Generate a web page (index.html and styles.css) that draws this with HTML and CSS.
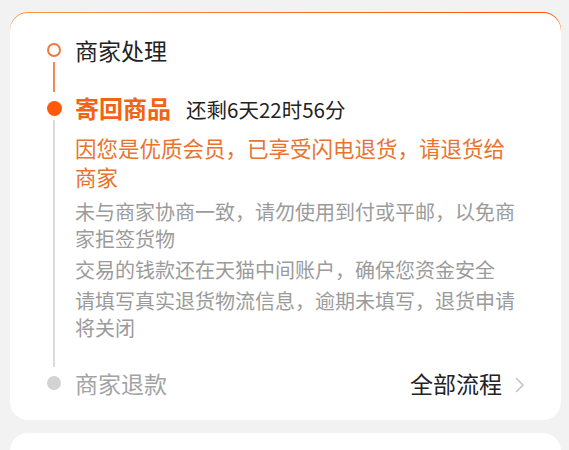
FILE: index.html
```html
<!DOCTYPE html>
<html lang="zh-CN">
<head>
<meta charset="utf-8">
<title>退货进度</title>
<link rel="stylesheet" href="styles.css">
</head>
<body>
<div class="page">
  <section class="panel">
    <div class="card">
      <div class="step step-done">
        <div class="rail">
          <span class="dot dot-ring"></span>
          <span class="line line-orange"></span>
        </div>
        <div class="body">
          <div class="title">商家处理</div>
        </div>
      </div>

      <div class="step step-current">
        <div class="rail">
          <span class="dot dot-fill"></span>
          <span class="line line-gray"></span>
        </div>
        <div class="body">
          <div class="title title-current">寄回商品<span class="countdown">还剩6天22时56分</span></div>
          <p class="desc desc-orange">因您是优质会员，已享受闪电退货，请退货给商家</p>
          <p class="desc desc-gray first">未与商家协商一致，请勿使用到付或平邮，以免商家拒签货物</p>
          <p class="desc desc-gray">交易的钱款还在天猫中间账户，确保您资金安全</p>
          <p class="desc desc-gray">请填写真实退货物流信息，逾期未填写，退货申请将关闭</p>
        </div>
      </div>

      <div class="step step-todo">
        <div class="rail">
          <span class="dot dot-gray"></span>
        </div>
        <div class="body body-row">
          <div class="title title-todo">商家退款</div>
          <a class="more">全部流程<svg class="chev" width="10" height="16" viewBox="0 0 10 16"><path d="M1.5 1.5 L8 8 L1.5 14.5" fill="none" stroke="#c4c4c4" stroke-width="1.6" stroke-linecap="round" stroke-linejoin="round"/></svg></a>
        </div>
      </div>
    </div>
  </section>
  <section class="card next-card"></section>
</div>
</body>
</html>
```

FILE: styles.css
```css
* { box-sizing: border-box; }
html, body { margin: 0; padding: 0; }
body {
  background: #f2f2f2;
  font-family: "Noto Sans CJK SC", "Noto Sans", "Liberation Sans", sans-serif;
  color: #222;
}
.page {
  padding: 12px 8px 0 10px;
}
.panel {
  background: linear-gradient(to right, #f39a50, #fb6a1e 60%, #ff5500) no-repeat top left / 100% 30px;
  border-radius: 18px;
}
.card {
  background: #fff;
  border-radius: 18px;
}
.panel > .card {
  padding: 21px 36px 21px 37px;
  position: relative;
  top: 1px;
}
.step {
  display: grid;
  grid-template-columns: 14px 1fr;
  column-gap: 14px;
}
.step-done, .step-current { padding-bottom: 26px; }
.rail {
  display: flex;
  flex-direction: column;
  align-items: center;
}
.step-done .rail, .step-current .rail { margin-bottom: -26px; }
.dot {
  width: 14px;
  height: 14px;
  border-radius: 50%;
  margin-top: 9px;
  flex: none;
}
.dot-ring { border: 2px solid #ef7a3a; }
.dot-fill { background: #ff5a0a; width: 15px; height: 15px; }
.dot-gray { background: #d3d3d3; }
.line {
  flex: 1;
  width: 1.5px;
  margin-top: 5px;
}
.line-orange { background: #ee8a55; }
.line-gray { background: #dcdcdc; margin-top: 4px; }
.title {
  font-size: 23px;
  line-height: 32px;
  color: #222;
  white-space: nowrap;
}
.title-current {
  font-size: 24px;
  font-weight: 700;
  color: #f06414;
}
.countdown {
  font-size: 20.5px;
  font-weight: 400;
  color: #222;
  margin-left: 15px;
}
.desc {
  margin: 0;
  padding-right: 6px;
}
.desc-orange {
  font-size: 21.5px;
  line-height: 29px;
  color: #e8742f;
  margin-top: 8px;
}
.desc-gray {
  font-size: 20px;
  line-height: 27px;
  color: #9b9b9b;
  margin-top: 4px;
}
.desc-gray.first { margin-top: 6.5px; }
.body-row {
  display: flex;
  justify-content: space-between;
  align-items: center;
}
.title-todo { color: #a3a3a3; }
.more {
  display: flex;
  align-items: center;
  font-size: 23px;
  line-height: 32px;
  color: #222;
  text-decoration: none;
}
.chev {
  margin-left: 13px;
  margin-top: 4px;
}
.next-card {
  margin-top: 14px;
  height: 120px;
}
```
